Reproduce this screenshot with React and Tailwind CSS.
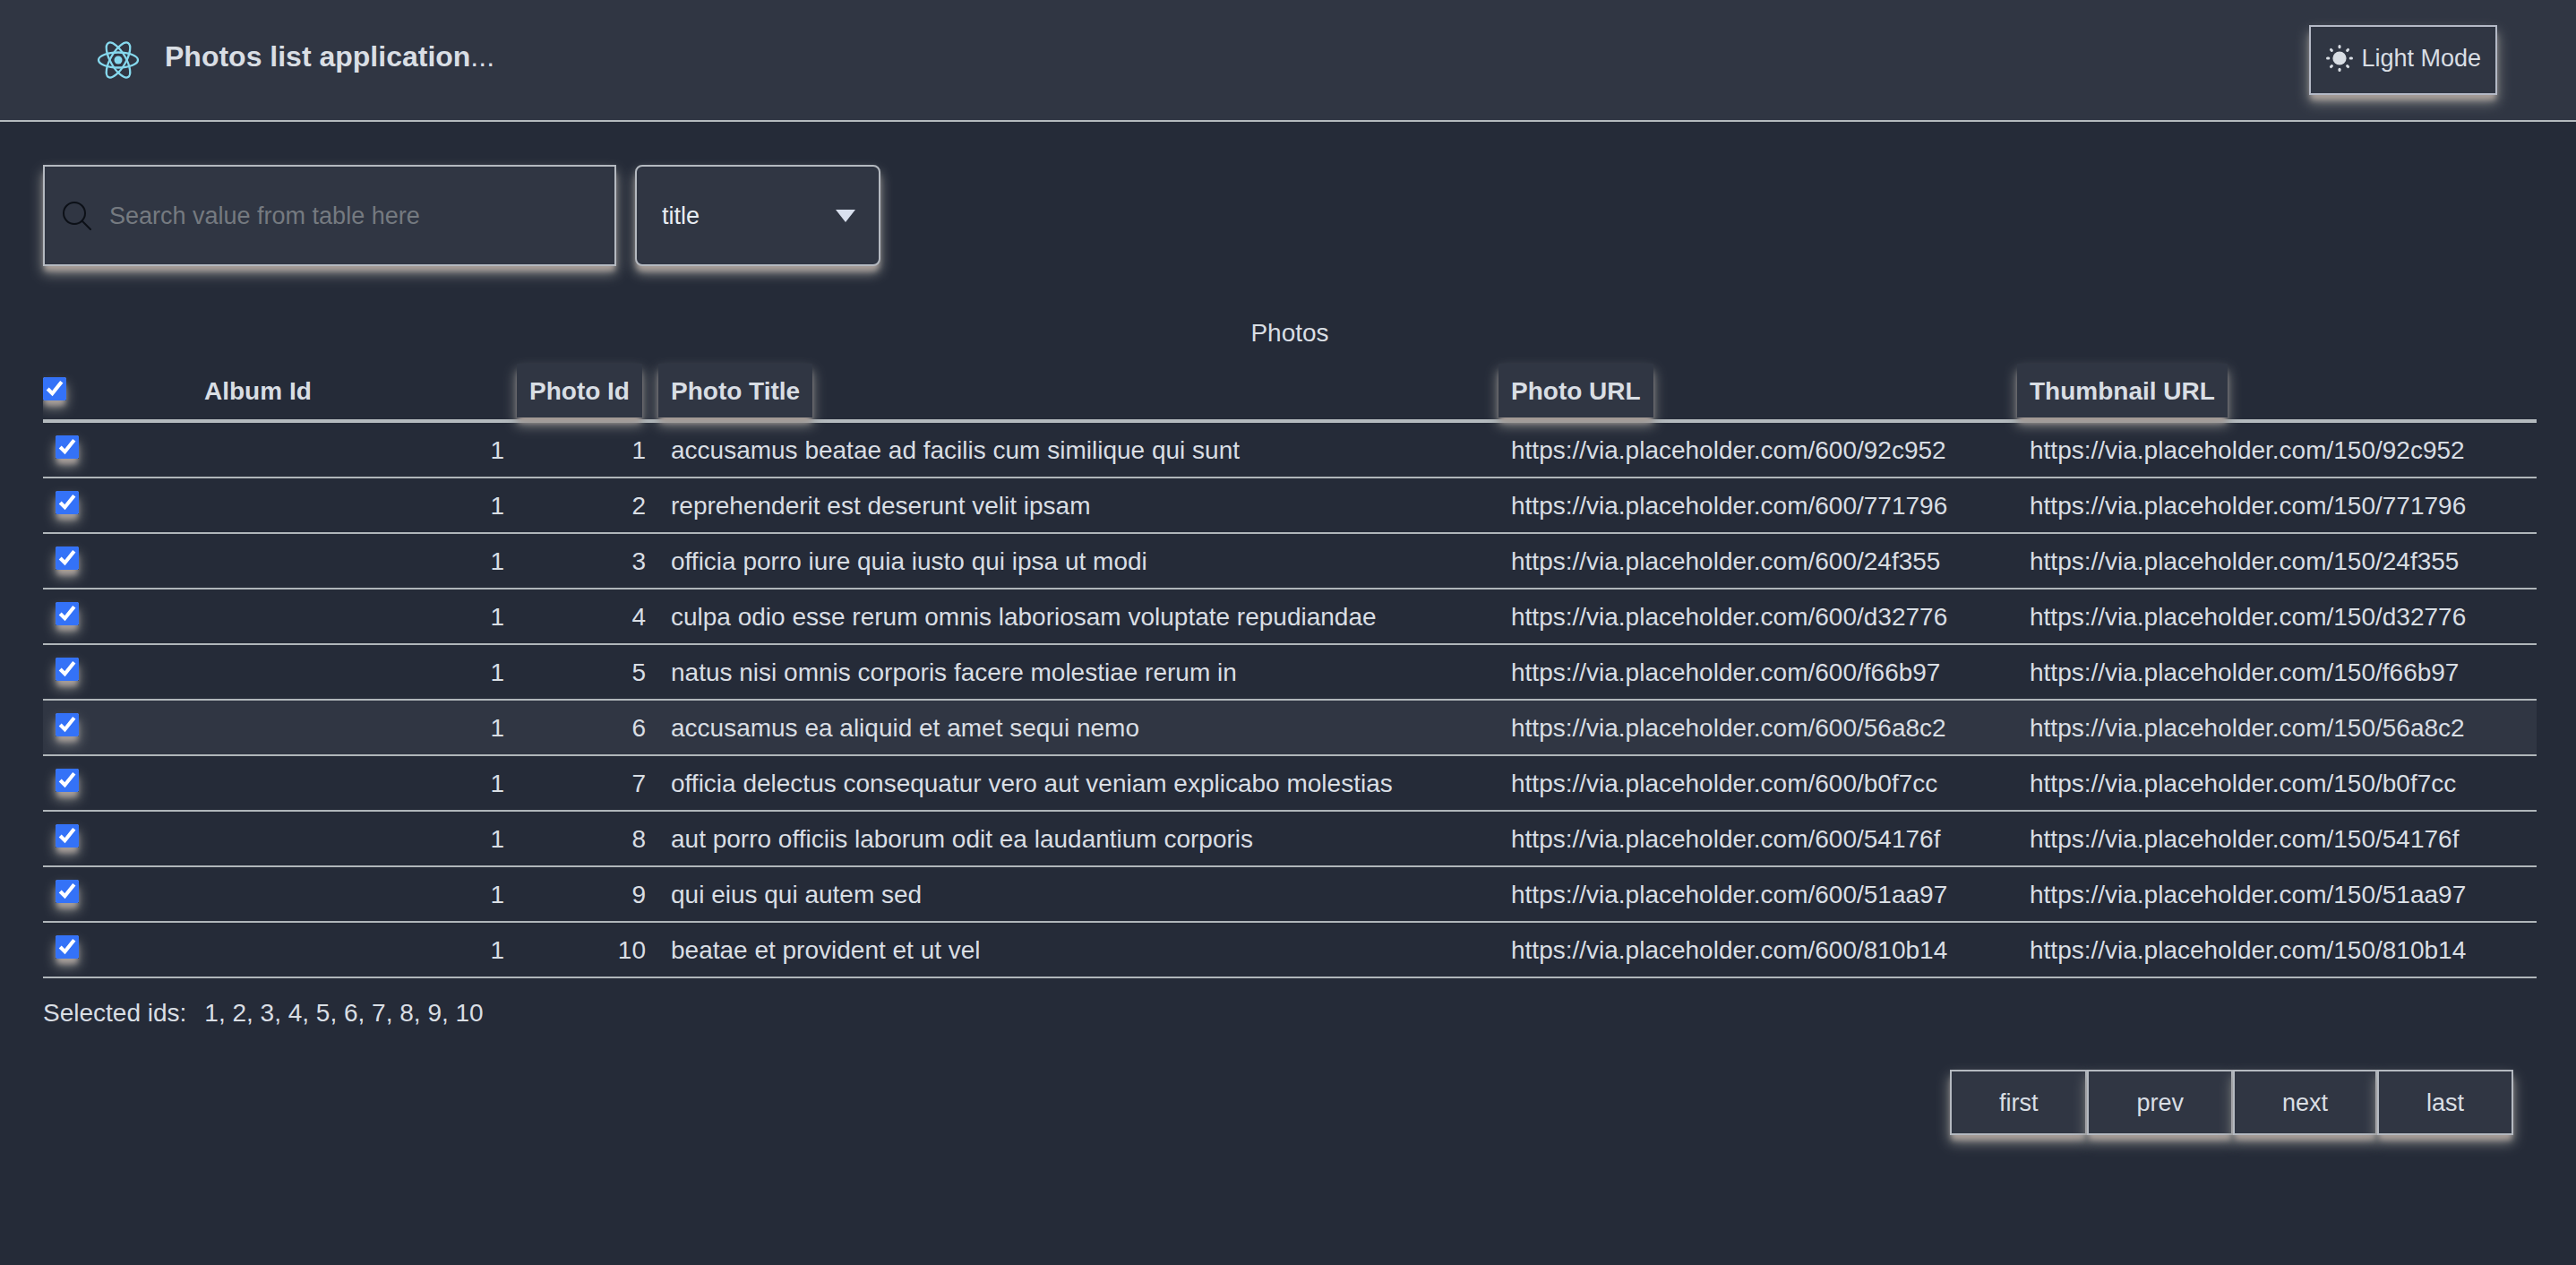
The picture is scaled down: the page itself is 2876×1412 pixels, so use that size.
import { useState } from "react";

const photos = [
  { id: 1, title: "accusamus beatae ad facilis cum similique qui sunt", hash: "92c952" },
  { id: 2, title: "reprehenderit est deserunt velit ipsam", hash: "771796" },
  { id: 3, title: "officia porro iure quia iusto qui ipsa ut modi", hash: "24f355" },
  { id: 4, title: "culpa odio esse rerum omnis laboriosam voluptate repudiandae", hash: "d32776" },
  { id: 5, title: "natus nisi omnis corporis facere molestiae rerum in", hash: "f66b97" },
  { id: 6, title: "accusamus ea aliquid et amet sequi nemo", hash: "56a8c2", active: true },
  { id: 7, title: "officia delectus consequatur vero aut veniam explicabo molestias", hash: "b0f7cc" },
  { id: 8, title: "aut porro officiis laborum odit ea laudantium corporis", hash: "54176f" },
  { id: 9, title: "qui eius qui autem sed", hash: "51aa97" },
  { id: 10, title: "beatae et provident et ut vel", hash: "810b14" },
];

const raised = "shadow-[0_7px_6px_-2px_#a89e99,0_8px_14px_#8a8c8c]";

function ReactLogo() {
  return (
    <svg viewBox="-24 -24 48 48" className="size-12" fill="none" stroke="#86d9ee" strokeWidth="2.3" aria-hidden="true">
      <circle r="4.5" fill="#86d9ee" stroke="none" />
      <ellipse rx="22" ry="8.5" />
      <ellipse rx="22" ry="8.5" transform="rotate(60)" />
      <ellipse rx="22" ry="8.5" transform="rotate(120)" />
    </svg>
  );
}

function SunIcon() {
  return (
    <svg viewBox="-16 -16 32 32" className="size-8" stroke="currentColor" strokeWidth="3" strokeLinecap="round" aria-hidden="true">
      <circle r="7.6" fill="currentColor" stroke="none" />
      {[0, 45, 90, 135, 180, 225, 270, 315].map((angle) => (
        <path key={angle} d="M0 -13.5V-12.2" transform={`rotate(${angle})`} />
      ))}
    </svg>
  );
}

function SearchIcon() {
  return (
    <svg viewBox="0 0 32 32" className="size-8 shrink-0" fill="none" stroke="#0c1017" strokeWidth="2" strokeLinecap="round" aria-hidden="true">
      <circle cx="13" cy="13" r="12" />
      <path d="M21.8 21.8L31 31" />
    </svg>
  );
}

function CheckBox({ label, ...props }) {
  return (
    <input
      type="checkbox"
      aria-label={label}
      className={`block size-[26px] rounded-sm accent-[#3472f7] ${raised}`}
      {...props}
    />
  );
}

function SortHeader({ children }) {
  return (
    <th scope="col" className="border-b-4 border-[#b4babe] p-0 pb-0.5 text-left align-top">
      <button type="button" className={`block bg-[#303643] px-3.5 pt-[15px] pb-[13px] leading-8 font-bold whitespace-nowrap ${raised}`}>
        {children}
      </button>
    </th>
  );
}

export default function App() {
  const [selected, setSelected] = useState(photos.map((p) => p.id));
  const [field, setField] = useState("title");
  const [query, setQuery] = useState("");
  const allSelected = selected.length === photos.length;

  const toggle = (id) =>
    setSelected((ids) => (ids.includes(id) ? ids.filter((i) => i !== id) : [...ids, id].sort((a, b) => a - b)));

  const line = "border-b-2 border-[#b0b6ba]";
  const cell = `${line} px-3.5 pt-[15px] pb-[13px]`;

  return (
    <div className="min-h-screen bg-[#252b38] font-['Liberation_Sans',Arial,sans-serif] text-[28px] leading-8 text-[#d9dee4]">
      <header className="flex items-center justify-between border-b-2 border-[#b4babe] bg-[#303643] py-7 pr-[88px] pl-[108px]">
        <div className="flex items-center gap-7">
          <ReactLogo />
          <h1 className="pb-2 text-[32px] leading-9 font-bold">
            Photos list application<span className="font-normal">...</span>
          </h1>
        </div>
        <button
          type="button"
          className={`flex items-center gap-2 border-2 border-[#b4b9c6] bg-[#303643] px-4 pt-[19px] pb-[23px] text-[27px] leading-8 ${raised}`}
        >
          <SunIcon />
          Light Mode
        </button>
      </header>

      <main className="px-11 pt-12">
        <div className="flex gap-[21px] pl-1">
          <label className={`flex h-[113px] w-[640px] items-center gap-5 border-2 border-[#b4b9c0] bg-[#303643] pl-5 text-[27px] ${raised}`}>
            <SearchIcon />
            <input
              type="text"
              aria-label="Search value"
              placeholder="Search value from table here"
              value={query}
              onChange={(e) => setQuery(e.target.value)}
              className="min-w-0 flex-1 bg-transparent outline-none placeholder:text-[#757a80]"
            />
          </label>
          <div className="relative">
            <select
              aria-label="Search field"
              value={field}
              onChange={(e) => setField(e.target.value)}
              className={`block h-[113px] w-[274px] appearance-none rounded-lg border-2 border-[#b4b9c0] bg-[#303643] pl-7 text-[27px] text-[#e8edf3] ${raised}`}
            >
              <option>title</option>
              <option>url</option>
            </select>
            <svg viewBox="0 0 22 14" className="pointer-events-none absolute top-[50px] right-7 h-3.5 w-[22px]" fill="#d9e0ee" aria-hidden="true">
              <path d="M0 0H22L11 14Z" />
            </svg>
          </div>
        </div>

        <div className="ml-1 overflow-x-clip pt-[59px]">
          <table className="w-full table-fixed border-separate border-spacing-0">
            <caption className="pb-[18px]">Photos</caption>
            <colgroup>
              <col className="w-[166px]" />
              <col className="w-[363px]" />
              <col className="w-[158px]" />
              <col className="w-[938px]" />
              <col className="w-[579px]" />
              <col className="w-[580px]" />
            </colgroup>
            <thead>
              <tr>
                <th scope="col" className="border-b-4 border-[#b4babe] p-0 pt-[15px] align-top">
                  <CheckBox
                    label="Select all photos"
                    checked={allSelected}
                    onChange={() => setSelected(allSelected ? [] : photos.map((p) => p.id))}
                  />
                </th>
                <th scope="col" className="border-b-4 border-[#b4babe] px-3.5 pt-[15px] text-left align-top font-bold">
                  Album Id
                </th>
                <SortHeader>Photo Id</SortHeader>
                <SortHeader>Photo Title</SortHeader>
                <SortHeader>Photo URL</SortHeader>
                <SortHeader>Thumbnail URL</SortHeader>
              </tr>
            </thead>
            <tbody>
              {photos.map((p) => (
                <tr key={p.id} className={p.active ? "bg-[#303643]" : "hover:bg-[#303643]"}>
                  <td className={`${line} p-3.5 align-top`}>
                    <CheckBox label={`Select photo ${p.id}`} checked={selected.includes(p.id)} onChange={() => toggle(p.id)} />
                  </td>
                  <td className={`${cell} text-right`}>1</td>
                  <td className={`${cell} text-right`}>{p.id}</td>
                  <td className={cell}>{p.title}</td>
                  <td className={cell}>{`https://via.placeholder.com/600/${p.hash}`}</td>
                  <td className={cell}>{`https://via.placeholder.com/150/${p.hash}`}</td>
                </tr>
              ))}
            </tbody>
          </table>
        </div>

        <p className="flex gap-5 pt-[23px] pl-1">
          <span>Selected ids:</span>
          <span>{selected.join(", ")}</span>
        </p>

        <nav aria-label="Pagination" className="flex justify-end pt-[47px] pr-[26px]">
          {["first", "prev", "next", "last"].map((name) => (
            <button
              key={name}
              type="button"
              className={`border-2 border-[#b4b9c0] bg-[#303643] px-[53px] pt-[19px] pb-[18px] text-[27px] leading-8 ${raised}`}
            >
              {name}
            </button>
          ))}
        </nav>
      </main>
    </div>
  );
}
